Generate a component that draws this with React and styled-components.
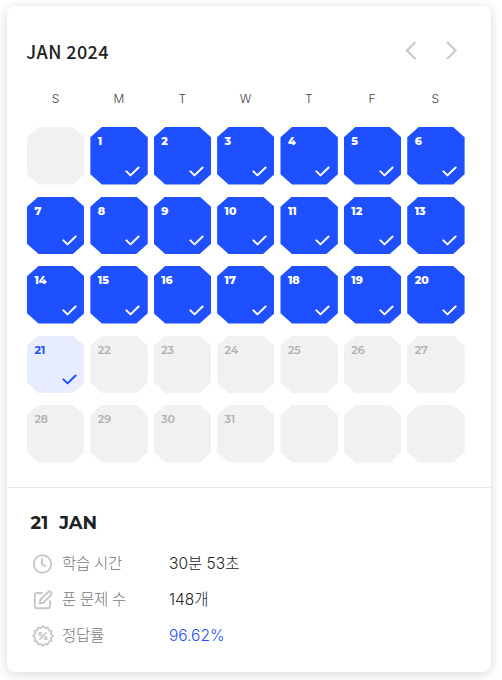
import styled, { createGlobalStyle, css } from 'styled-components';

const GlobalStyle = createGlobalStyle`
  * {
    box-sizing: border-box;
  }

  body {
    background-color: #fff;
    margin: 0;
    min-height: 680px;
    padding: 6px 0 8px 7px;
  }
`;

const Card = styled.main`
  background-color: #fff;
  border-radius: 8px;
  box-shadow: 0 2px 12px rgba(0, 0, 0, 0.16);
  height: 666px;
  width: 484px;
`;

const Calendar = styled.section`
  border-bottom: 1px solid #e8e8e8;
  height: 482px;
  padding: 31px 26px 0 20px;
`;

const Header = styled.header`
  align-items: center;
  display: flex;
  height: 28px;
  justify-content: space-between;
`;

const Month = styled.h1`
  color: #222;
  font-family: 'Noto Sans CJK KR', sans-serif;
  font-size: 18px;
  font-weight: 500;
  letter-spacing: 0.4px;
  line-height: 26px;
  margin: 0 0 0 -0.7px;
`;

const Arrows = styled.nav`
  display: flex;
  gap: 16px;
  padding-right: 1px;
`;

const ArrowButton = styled.button`
  background: none;
  border: 0;
  cursor: pointer;
  height: 24px;
  padding: 0;
  width: 24px;

  svg {
    display: block;
  }
`;

const Weekdays = styled.div`
  color: #444;
  display: grid;
  font-family: Inter, sans-serif;
  font-size: 12px;
  font-weight: 300;
  gap: 6px;
  grid-template-columns: repeat(7, 1fr);
  line-height: 16px;
  margin-top: 26px;
  padding-right: 1px;
  text-align: center;
`;

const Days = styled.div`
  display: grid;
  gap: 12px 6px;
  grid-auto-rows: 57.5px;
  grid-template-columns: repeat(7, 1fr);
  margin-top: 20px;
  padding-right: 0.4px;
`;

const Day = styled.div`
  background-color: #f1f1f1;
  clip-path: polygon(20% 0, 80% 0, 100% 18%, 100% 82%, 80% 100%, 20% 100%, 0 82%, 0 18%);
  color: #b0b0b0;
  display: flex;
  flex-direction: column;
  font-family: Montserrat, Inter, sans-serif;
  font-size: 11px;
  font-weight: 600;
  justify-content: space-between;
  line-height: 14px;
  padding: 7px 7.4px 8px 7.4px;

  svg {
    align-self: flex-end;
    display: block;
  }

  ${({ $state }) =>
    $state === 'done' &&
    css`
      background-color: #1f50ff;
      color: #fff;
      font-weight: 800;
    `}

  ${({ $state }) =>
    $state === 'today' &&
    css`
      background-color: #e7ecff;
      color: #1f50ff;
      font-weight: 700;
    `}
`;

const Summary = styled.section`
  padding: 23px 23px 0;
`;

const SummaryDate = styled.h2`
  color: #222;
  display: flex;
  font-family: Montserrat, Inter, sans-serif;
  font-size: 18px;
  font-weight: 700;
  gap: 11px;
  line-height: 24px;
  margin: 0 0 10px 0.6px;
`;

const Stats = styled.dl`
  font-family: Inter, 'Noto Sans CJK KR', sans-serif;
  font-size: 15.5px;
  font-weight: 300;
  line-height: 36px;
  margin: 0;
`;

const Stat = styled.div`
  align-items: center;
  display: grid;
  grid-template-columns: 32px 107px 1fr;
  height: 36px;

  svg {
    display: block;
  }
`;

const Label = styled.dt`
  color: #777;
  letter-spacing: -0.3px;
  padding-top: 1px;
`;

const Value = styled.dd`
  color: ${({ $accent }) => ($accent ? '#1f50ff' : '#222')};
  margin: 0;
  padding-top: 1px;
`;

const Arrow = ({ points }) => (
  <svg width="24" height="24" fill="none" stroke="#c8c8c8" strokeWidth="2">
    <polyline points={points} />
  </svg>
);

const Check = () => (
  <svg width="15" height="11" fill="none" stroke="currentColor" strokeWidth="2" strokeLinecap="round" strokeLinejoin="round">
    <path d="M1.4 5.4 5.5 9.4 13.6 1.5" />
  </svg>
);

const Icon = ({ children }) => (
  <svg
    width="24"
    height="24"
    viewBox="0 0 24 24"
    fill="none"
    stroke="#c8c8c8"
    strokeWidth="2"
    strokeLinecap="round"
    strokeLinejoin="round"
  >
    {children}
  </svg>
);

const ClockIcon = () => (
  <Icon>
    <circle cx="12.5" cy="12" r="8.7" />
    <path d="M12 7.2V12.2L15.2 14" />
  </Icon>
);

const EditIcon = () => (
  <Icon>
    <path d="M12 5H7Q4.8 5 4.8 7.2V18Q4.8 20.3 7 20.3H17.8Q20 20.3 20 18V13" />
    <path d="M18 4.1a2.1 2.1 0 0 1 3 3L13.2 14.7 9.7 15.3 10.3 11.8Z" />
  </Icon>
);

// Twelve-pointed rosette outline around the percent sign
const badgePoints = Array.from({ length: 24 }, (_, i) => {
  const angle = (i * Math.PI) / 12 - Math.PI / 2;
  const radius = i % 2 ? 8.1 : 9.9;
  return `${13 + radius * Math.cos(angle)},${12 + radius * Math.sin(angle)}`;
}).join(' ');

const AccuracyIcon = () => (
  <Icon>
    <polygon points={badgePoints} strokeWidth="1.8" />
    <path d="M16.1 8.9 9.9 15.1" strokeWidth="1.6" />
    <circle cx="10.2" cy="9.9" r="1.3" strokeWidth="1.5" />
    <circle cx="15.8" cy="14.2" r="1.3" strokeWidth="1.5" />
  </Icon>
);

const weekdays = ['S', 'M', 'T', 'W', 'T', 'F', 'S'];
const today = 21;

// January 2024 starts on a Monday, five weeks are shown
const days = Array.from({ length: 35 }, (_, i) => (i > 0 && i <= 31 ? i : null));

const stats = [
  { label: '학습 시간', value: '30분 53초', StatIcon: ClockIcon },
  { label: '푼 문제 수', value: '148개', StatIcon: EditIcon },
  { label: '정답률', value: '96.62%', StatIcon: AccuracyIcon, accent: true },
];

const getState = (day) => {
  if (!day || day > today) return 'empty';
  return day === today ? 'today' : 'done';
};

const App = () => {
  return (
    <>
      <GlobalStyle />
      <Card>
        <Calendar>
          <Header>
            <Month>JAN 2024</Month>
            <Arrows>
              <ArrowButton aria-label="Previous month">
                <Arrow points="15.5,3 6.8,11.5 15.5,20" />
              </ArrowButton>
              <ArrowButton aria-label="Next month">
                <Arrow points="7,3 15.7,11.5 7,20" />
              </ArrowButton>
            </Arrows>
          </Header>
          <Weekdays>
            {weekdays.map((name, i) => (
              <span key={i}>{name}</span>
            ))}
          </Weekdays>
          <Days>
            {days.map((day, i) => (
              <Day key={i} $state={getState(day)}>
                <span>{day}</span>
                {day && day <= today && <Check />}
              </Day>
            ))}
          </Days>
        </Calendar>
        <Summary>
          <SummaryDate>
            <span>21</span>
            <span>JAN</span>
          </SummaryDate>
          <Stats>
            {stats.map(({ label, value, StatIcon, accent }) => (
              <Stat key={label}>
                <StatIcon />
                <Label>{label}</Label>
                <Value $accent={accent}>{value}</Value>
              </Stat>
            ))}
          </Stats>
        </Summary>
      </Card>
    </>
  );
};

export default App;
